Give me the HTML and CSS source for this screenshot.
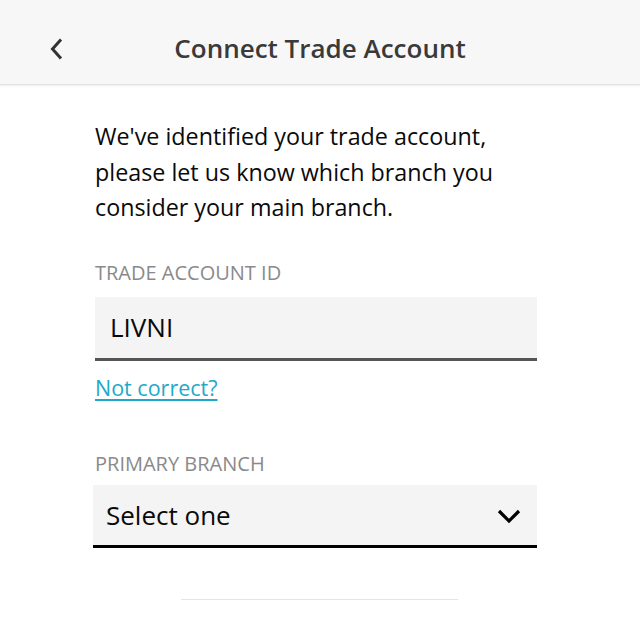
FILE: index.html
```html
<!DOCTYPE html>
<html lang="en">
<head>
    <meta charset="UTF-8">
    <meta name="viewport" content="width=device-width, initial-scale=1.0">
    <title>Connect Trade Account</title>
    <link rel="stylesheet" href="styles.css">
</head>
<body>
  <div class="header">
    <button class="back" aria-label="Back">
      <svg width="16" height="22" viewBox="0 0 16 22"><path d="M13 1.5 L4.5 11 L13 20.5" fill="none" stroke="#333" stroke-width="3"/></svg>
    </button>
    <h1 class="title">Connect Trade Account</h1>
  </div>

  <div class="container">
    <p class="intro">We've identified your trade account, please let us know which branch you consider your main branch.</p>

    <div class="form-group">
      <label class="field-label">TRADE ACCOUNT ID</label>
      <div class="field field-readonly">LIVNI</div>
      <a href="#" class="link">Not correct?</a>
    </div>

    <div class="form-group branch">
      <label class="field-label">PRIMARY BRANCH</label>
      <div class="field field-select">
        <span>Select one</span>
        <svg width="24" height="16" viewBox="0 0 24 16"><path d="M2 3 L12 13 L22 3" fill="none" stroke="#000" stroke-width="3.2"/></svg>
      </div>
    </div>

    <div class="divider"></div>
  </div>
</body>
</html>
```

FILE: styles.css
```css
body {
    font-family: "Open Sans", "Noto Sans", sans-serif;
    background-color: #fff;
    margin: 0;
    padding: 0;
    color: #111;
}
.header {
    height: 84px;
    background: #f7f7f7;
    border-bottom: 1px solid #e2e2e2;
    box-shadow: 0 1px 2px rgba(0, 0, 0, 0.08);
    display: flex;
    align-items: center;
    justify-content: center;
    position: relative;
}
.back {
    position: absolute;
    left: 48px;
    top: 38px;
    background: none;
    border: none;
    padding: 0;
    cursor: pointer;
}
.title {
    margin: 12px 0 0 0;
    font-size: 26px;
    font-weight: 600;
    color: #3a3a3a;
}
.container {
    padding: 34px 103px 0 95px;
}
.intro {
    margin: 0;
    font-size: 23.3px;
    line-height: 35.5px;
    color: #0a0a0a;
}
.form-group {
    margin-top: 33px;
}
.field-label {
    display: block;
    font-size: 20px;
    line-height: 28px;
    color: #8a8a8a;
    margin-bottom: 10px;
}
.field {
    background: #f4f4f4;
    height: 61px;
    display: flex;
    align-items: center;
}
.field-readonly {
    padding-left: 15px;
    border-bottom: 3px solid #555;
    color: #0a0a0a;
    font-size: 26px;
}
.link {
    display: inline-block;
    margin-top: 12px;
    font-size: 21.5px;
    color: #1ea9c9;
    text-decoration: underline;
    text-underline-offset: 3px;
}
.branch {
    margin-top: 48px;
}
.branch .field-label {
    margin-bottom: 7px;
}
.field-select {
    height: 60px;
    margin-left: -2px;
    padding: 0 16px 0 13px;
    border-bottom: 3px solid #000;
    justify-content: space-between;
    font-size: 26px;
    color: #0a0a0a;
}
.field-select svg {
    margin-top: 2px;
}
.divider {
    margin: 51px 79px 0 86px;
    border-top: 1px solid #e5e5e5;
}
```
